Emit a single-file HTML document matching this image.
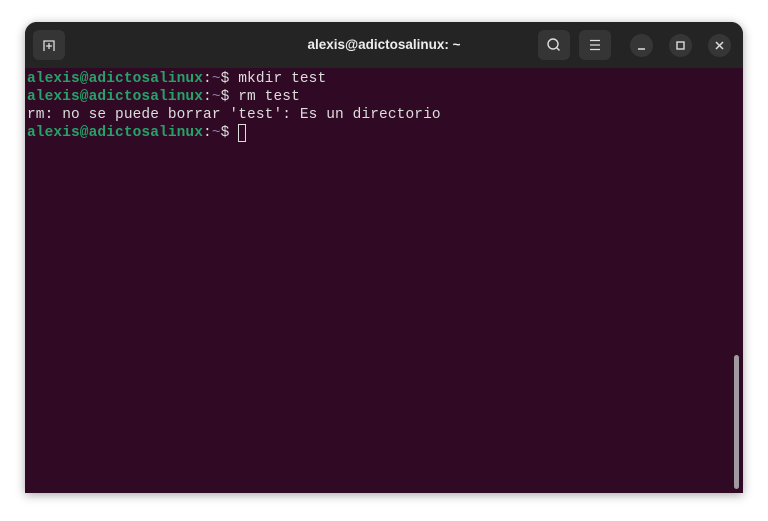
<!DOCTYPE html>
<html><head><style>
body{margin:0;width:768px;height:521px;background:#fff;position:relative;overflow:hidden;font-family:"Liberation Sans",sans-serif}
.win{position:absolute;left:25px;top:22px;width:718px;height:471px;background:#300a24;border-radius:12px 12px 0 0;overflow:hidden;box-shadow:0 2px 10px rgba(0,0,0,.35)}
.hdr{position:absolute;left:0;top:0;width:718px;height:46px;background:#242424}
.btn{position:absolute;top:8px;width:32px;height:30px;background:#353535;border-radius:6px}
.circ{position:absolute;top:12px;width:23px;height:23px;border-radius:50%;background:#363636}
.title{position:absolute;left:0;right:0;top:15px;text-align:center;color:#eee;font-weight:bold;font-size:13.5px}
.term{position:absolute;left:2px;top:48px;font-family:"Liberation Mono",monospace;font-size:14.5px;line-height:18px;color:#ddd;white-space:pre;letter-spacing:0.1px}
.g{color:#26a269;font-weight:bold}.b{color:#8a7fa8}
.cur{display:inline-block;width:8px;height:16px;border:1px solid #ddd;box-sizing:border-box;vertical-align:top;margin-top:0px;height:18px}
.sb{position:absolute;left:709px;top:333px;width:5px;height:134px;background:#a09aa0;border-radius:3px}
</style></head><body>
<div class="win">
<div class="hdr">
<div class="btn" style="left:8px"><svg width="32" height="30"><path d="M11 21V11h10v10M16 13v6M13 16h6" stroke="#ddd" stroke-width="1.3" fill="none"/></svg></div>
<div class="title">alexis@adictosalinux: ~</div>
<div class="btn" style="left:513px"><svg width="32" height="30"><circle cx="15" cy="14" r="5" stroke="#ddd" stroke-width="1.4" fill="none"/><path d="M18.5 17.5l3 3" stroke="#ddd" stroke-width="1.4"/></svg></div>
<div class="btn" style="left:554px"><svg width="32" height="30"><path d="M11 10.5h10M11 15h10M11 19.5h10" stroke="#ddd" stroke-width="1.2"/></svg></div>
<div class="circ" style="left:605px"><svg width="23" height="23"><path d="M8 15h7" stroke="#ddd" stroke-width="1.5"/></svg></div>
<div class="circ" style="left:644px"><svg width="23" height="23"><rect x="8" y="8" width="7" height="7" stroke="#ddd" stroke-width="1.4" fill="none"/></svg></div>
<div class="circ" style="left:683px"><svg width="23" height="23"><path d="M8 8l7 7M15 8l-7 7" stroke="#ddd" stroke-width="1.5"/></svg></div>
</div>
<div class="term"><span class="g">alexis@adictosalinux</span>:<span class="b">~</span>$ mkdir test
<span class="g">alexis@adictosalinux</span>:<span class="b">~</span>$ rm test
rm: no se puede borrar 'test': Es un directorio
<span class="g">alexis@adictosalinux</span>:<span class="b">~</span>$ <span class="cur"></span></div>
<div class="sb"></div>
</div>
</body></html>
